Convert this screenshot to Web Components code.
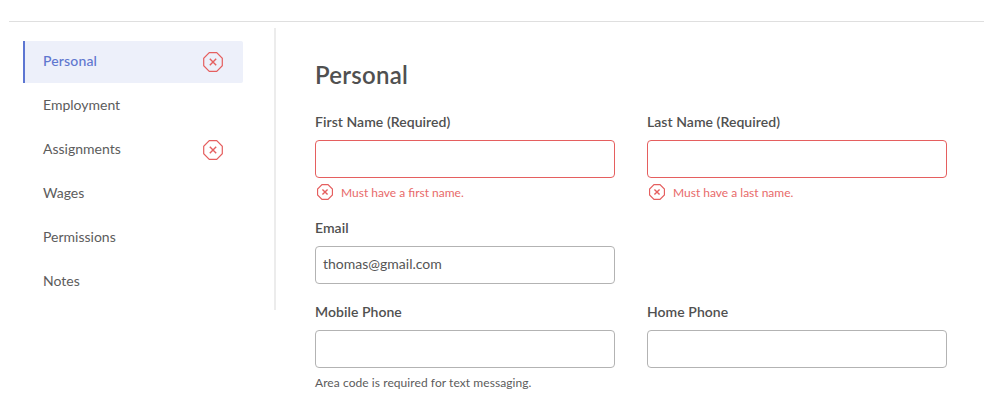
<!DOCTYPE html>
<html><head><meta charset="utf-8">
<style>
html,body{margin:0;padding:0;background:#fff;overflow:hidden}
body{font-family:Lato,"Liberation Sans",sans-serif;color:#4a4a4a;height:407px}
</style></head><body>
<template id="err-t"><style>:host{display:inline-block;line-height:0}svg{display:block}</style>
<svg fill="none" stroke="#e55f5f"><polygon/><path/></svg></template>
<app-shell>
<side-nav slot="nav">
<nav-item active error>Personal</nav-item>
<nav-item>Employment</nav-item>
<nav-item error>Assignments</nav-item>
<nav-item>Wages</nav-item>
<nav-item>Permissions</nav-item>
<nav-item>Notes</nav-item>
</side-nav>
<h-title>Personal</h-title>
<form-row>
<form-field label="First Name (Required)" error="Must have a first name."></form-field>
<form-field label="Last Name (Required)" error="Must have a last name."></form-field>
</form-row>
<form-row>
<form-field label="Email" value="thomas@gmail.com"></form-field>
</form-row>
<form-row>
<form-field label="Mobile Phone" hint="Area code is required for text messaging."></form-field>
<form-field label="Home Phone"></form-field>
</form-row>
</app-shell>
<script>
class ErrIcon extends HTMLElement{
  constructor(){super();
    const s=+this.getAttribute('size')||20, r=this.attachShadow({mode:'open'});
    r.appendChild(document.getElementById('err-t').content.cloneNode(true));
    const svg=r.querySelector('svg');
    svg.setAttribute('width',s);svg.setAttribute('height',s);svg.setAttribute('viewBox','0 0 20 20');
    svg.setAttribute('stroke-width',(20/s*1.2).toFixed(2));
    r.querySelector('polygon').setAttribute('points','6.3,.7 13.7,.7 19.3,6.3 19.3,13.7 13.7,19.3 6.3,19.3 .7,13.7 .7,6.3');
    const p=r.querySelector('path');p.setAttribute('d','M6.8 6.8 13.2 13.2M13.2 6.8 6.8 13.2');p.setAttribute('stroke-width',(20/s*1.4).toFixed(2));
  }
}
customElements.define('err-icon',ErrIcon);
class AppShell extends HTMLElement{
  constructor(){super();this.attachShadow({mode:'open'}).innerHTML=`<style>
  :host{display:block;padding:21px 0 0 9px}
  .top{border-top:1px solid #dfdfdf;display:flex;padding:6px 0 0 14px}
  .nav{width:253px;height:282px;border-right:2px solid #ececec;padding-top:13px;box-sizing:border-box;flex:none}
  .main{padding:0 0 0 39px;flex:1}
  </style><div class="top"><div class="nav"><slot name="nav"></slot></div><div class="main"><slot></slot></div></div>`;}
}
customElements.define('app-shell',AppShell);
class SideNav extends HTMLElement{
  constructor(){super();this.attachShadow({mode:'open'}).innerHTML=`<style>:host{display:flex;flex-direction:column;gap:2px;width:220px}</style><slot></slot>`;}
}
customElements.define('side-nav',SideNav);
class NavItem extends HTMLElement{
  constructor(){super();const a=this.hasAttribute('active'),e=this.hasAttribute('error');
    this.attachShadow({mode:'open'}).innerHTML=`<style>
    :host{display:flex;align-items:center;justify-content:space-between;height:42px;box-sizing:border-box;padding:0 20px 0 ${a?18:20}px;font-size:14px;color:${a?'#5f77cf':'#5c5c5c'};
    ${a?'background:#edf0fa;border-left:2px solid #5d76d2;border-radius:0 2px 2px 0;font-weight:500;letter-spacing:.15px;':''}}
    span{position:relative;top:-2px}
    </style><span><slot></slot></span>${e?'<err-icon size="20"></err-icon>':''}`;}
}
customElements.define('nav-item',NavItem);
class HTitle extends HTMLElement{
  constructor(){super();this.attachShadow({mode:'open'}).innerHTML=`<style>:host{display:block;font-size:24px;line-height:30px;font-weight:600;color:#505050;letter-spacing:.25px;margin:32px 0 23px}</style><slot></slot>`;}
}
customElements.define('h-title',HTitle);
class FormRow extends HTMLElement{
  constructor(){super();this.attachShadow({mode:'open'}).innerHTML=`<style>:host{display:flex;gap:32px;margin-bottom:19px}</style><slot></slot>`;}
}
customElements.define('form-row',FormRow);
class FormField extends HTMLElement{
  constructor(){super();const g=k=>this.getAttribute(k),er=g('error'),hint=g('hint'),v=g('value');
    this.attachShadow({mode:'open'}).innerHTML=`<style>
    :host{display:block;width:300px;font-size:14px}
    label{display:block;font-weight:600;font-size:14px;line-height:18px;color:#505050;letter-spacing:.05px}
    .box{height:38px;box-sizing:border-box;margin-top:9px;border:1px solid ${er?'#e55f5f':'#b3b3b3'};border-radius:4px;padding:0 7px;line-height:33px;font-size:14px;color:#555}
    .err{display:flex;align-items:center;gap:8px;margin-top:6px;height:16px;font-size:12px;color:#e86a6a;padding-left:2px}
    .hint{margin-top:7px;font-size:12px;line-height:16px;color:#5c5c5c;letter-spacing:.07px}
    </style><label>${g('label')}</label><div class="box">${v||''}</div>
    ${er?`<div class="err"><err-icon size="16"></err-icon><span>${er}</span></div>`:''}
    ${hint?`<div class="hint">${hint}</div>`:''}`;}
}
customElements.define('form-field',FormField);
</script>
</body></html>
